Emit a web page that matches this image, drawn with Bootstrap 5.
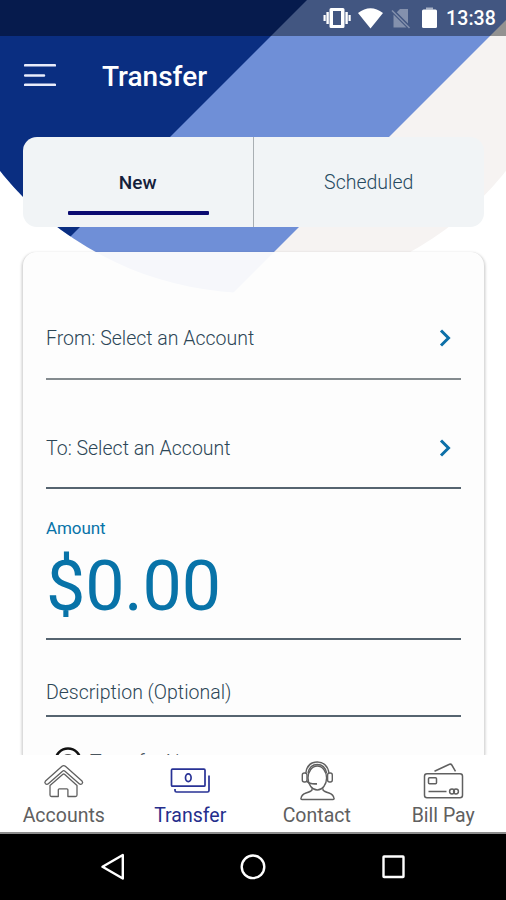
<!DOCTYPE html>
<html lang="en">
<head>
<meta charset="utf-8">
<meta name="viewport" content="width=device-width, initial-scale=1">
<title>Transfer</title>
<link href="https://cdn.jsdelivr.net/npm/bootstrap@5.3.0/dist/css/bootstrap.min.css" rel="stylesheet">
<style>
  body { font-family: Roboto, sans-serif; }
  svg { display: block; flex: none; }
  .screen { width: 506px; height: 900px; }
  .backdrop { z-index: 0; }
  .layer { z-index: 1; }
  .status-bar { height: 36px; padding: 0 10px 0 0; background: rgba(0,0,0,.4); }
  .clock { font-size: 19.5px; font-weight: 500; line-height: 36px; margin: 2px 0 0 9px; letter-spacing: .1px; }
  .app-bar { height: 101px; padding: 22px 24px 0; }
  .page-title { font-size: 28px; font-weight: 500; line-height: 38px; margin: 0 0 0 46px; }
  .tabs { height: 90px; margin: 0 22px 0 23px; border-radius: 14px; background: #f1f4f6; }
  .tab { border: 0; padding: 0; background: none; font-size: 19.5px; font-weight: 300; color: #264960; line-height: 92px; height: 90px; }
  .tab.current { color: #14203a; font-weight: 500; font-size: 19px; border-right: 1px solid #a9afb3; }
  .tab.current::after { content: ""; position: absolute; left: 45px; width: 141px; bottom: 12px; height: 4px; border-radius: 1px; background: #0b0b71; }
  .form-panel { margin: 25px 21px 0 22px; padding: 0 23px; height: 503px; border-radius: 14px 14px 0 0; background: rgba(253,253,253,.95); border: 0 solid #dcdcdc; border-width: 0 1px; box-shadow: 0 1px 3px rgba(0,0,0,.25); }
  .field { border-bottom: 2px solid #566470; font-size: 19.5px; font-weight: 300; color: #2c4656; line-height: 24px; }
  .field-from { height: 128px; padding: 75px 7px 0 0; border-color: #848b8f; }
  .field-to { height: 109px; padding: 57px 7px 0 0; }
  .field svg { margin-top: -1px; }
  .field-amount { height: 151px; padding-top: 27px; color: #0873a8; }
  .amount-label { font-size: 17px; font-weight: 400; line-height: 24px; letter-spacing: -.1px; }
  .amount-value { font-size: 70px; font-weight: 400; line-height: 82px; margin-top: 5px; letter-spacing: -.2px; }
  .field-desc { height: 77px; padding-top: 41px; }
  .option { padding: 29px 0 0 8px; font-size: 19.5px; line-height: 28px; color: #4a555d; font-weight: 300; }
  .option span { padding-top: 3px; }
  .bottom-nav { height: 79px; background: #fff; border-bottom: 2px solid #8c8c8c; padding-top: 5px; }
  .nav-entry { font-size: 19.5px; font-weight: 400; color: #606060; line-height: 24px; padding-left: 1px; }
  .nav-entry.current { color: #252e8c; }
  .nav-entry svg { margin-bottom: 2px; }
  .system-bar { height: 66px; background: #000; }
</style>
<script src="https://cdn.jsdelivr.net/npm/bootstrap@5.3.0/dist/js/bootstrap.bundle.min.js"></script>
</head>
<body class="bg-white">
<div class="screen position-relative overflow-hidden bg-white">
  <svg class="backdrop position-absolute top-0 start-0" width="506" height="300" viewBox="0 0 506 300">
    <defs><clipPath id="dome"><circle cx="253" cy="-30" r="323"/></clipPath></defs>
    <g clip-path="url(#dome)">
      <path fill="#f6f3f2" d="M0 0H506V300H0z"/>
      <path fill="#6f8fd7" d="M0 0H526L226 300H0z"/>
      <path fill="#0a2e81" d="M0 0H307L7 300H0z"/>
    </g>
  </svg>

  <div class="layer position-relative d-flex flex-column h-100">
    <div class="status-bar d-flex align-items-center justify-content-end text-white">
      <svg width="114" height="36" viewBox="323 0 114 36" fill="#fff">
        <path d="M331 8h12a1.5 1.5 0 0 1 1.500 1.500v17a1.500 1.500 0 0 1-1.500 1.500h-12a1.500 1.500 0 0 1-1.500-1.500v-17A1.500 1.500 0 0 1 331 8zm2 3v14h8V11z"/>
        <path d="M326.400 12h2.400v12h-2.400zM323.500 15h2.200v6h-2.200zM345.400 12h2.400v12h-2.400zM348.500 15h2.200v6h-2.200z"/>
        <path d="M358 13q12.500-9.500 25 0l-12.500 15.500z"/>
        <path fill-opacity=".35" d="M400 9h8v14.500L396.800 12.300zM393.500 14.500L406.500 27.500H393.500z"/>
        <path fill="none" stroke="#fff" stroke-opacity=".35" stroke-width="1.500" d="M392 10.500L409.500 28"/>
        <path d="M422 11q0-1.500 1.500-1.500h12q1.500 0 1.500 1.500v15.500q0 1.500-1.500 1.500h-12q-1.500 0-1.500-1.500z"/>
        <path fill-opacity=".55" d="M426 7.500h7v2h-7z"/>
      </svg>
      <span class="clock">13:38</span>
    </div>

    <header class="app-bar d-flex align-items-start text-white">
      <svg width="32" height="38" viewBox="24 58 32 38" fill="none" stroke="#e9ecfb" stroke-width="2.500" stroke-linecap="round"><path d="M25 65.300H55M25 75.500H44M25 84.800H55"/></svg>
      <h1 class="page-title">Transfer</h1>
    </header>

    <div class="tabs row g-0">
      <button class="tab current col-auto position-relative text-center w-50 pe-0">New</button>
      <button class="tab col text-center">Scheduled</button>
    </div>

    <main class="form-panel overflow-hidden">
      <div class="field field-from d-flex justify-content-between align-items-start">
        <span>From: Select an Account</span>
        <svg width="16" height="24" viewBox="0 0 16 24" fill="none" stroke="#0d70a8" stroke-width="3"><path d="M3 4.500L10.500 12 3 19.500"/></svg>
      </div>
      <div class="field field-to d-flex justify-content-between align-items-start">
        <span>To: Select an Account</span>
        <svg width="16" height="24" viewBox="0 0 16 24" fill="none" stroke="#0d70a8" stroke-width="3"><path d="M3 4.500L10.500 12 3 19.500"/></svg>
      </div>
      <div class="field field-amount">
        <div class="amount-label">Amount</div>
        <div class="amount-value">$0.00</div>
      </div>
      <div class="field field-desc">Description (Optional)</div>
      <div class="option d-flex align-items-start">
        <svg width="28" height="28" viewBox="0 0 28 28"><circle cx="14" cy="15" r="12.500" fill="none" stroke="#111" stroke-width="2.500"/><circle cx="14" cy="15" r="7" fill="#555"/></svg>
        <span class="ms-2">Transfer Now</span>
      </div>
    </main>

    <nav class="bottom-nav row g-0 text-center">
      <div class="nav-entry col d-flex flex-column align-items-center">
        <svg width="42" height="42" viewBox="43 760 42 42" fill="none" stroke="#606060" stroke-width="1.300" stroke-linejoin="round">
          <path d="M62 766.300q1.700-1.300 3.400 0L82 781q1.300 1.500 0 2.700-1.400 1.200-2.800 0L65 771.200q-1.200-1-2.500 0L48.300 783.700q-1.400 1.200-2.800 0-1.300-1.200 0-2.700z"/>
          <path d="M50 785.500V795q0 1.500 1.500 1.500h6.800v-6.700q0-1 1-1h7.600q1 0 1 1v6.700h7.600q1.500 0 1.500-1.500v-9.500L64.500 774.300q-.8-.7-1.600 0z"/>
        </svg>
        <span>Accounts</span>
      </div>
      <div class="nav-entry current col d-flex flex-column align-items-center">
        <svg width="42" height="42" viewBox="169 760 42 42" fill="none" stroke="#283295" stroke-width="1.700">
          <rect x="171.500" y="769.200" width="33.500" height="17" rx="1"/>
          <ellipse cx="188.300" cy="777.800" rx="2.800" ry="3.900"/>
          <path d="M209 775.500v15q0 1.500-1.500 1.500H176.500q-1.500 0-1.500-1.500v-1.500"/>
        </svg>
        <span>Transfer</span>
      </div>
      <div class="nav-entry col d-flex flex-column align-items-center">
        <svg width="42" height="42" viewBox="295 760 42 42" fill="none" stroke="#606060" stroke-width="1.400" stroke-linejoin="round">
          <ellipse cx="316.300" cy="778" rx="9.300" ry="12"/>
          <path d="M304.700 773.500C305.500 766 310 762 316.300 762S327.200 766 328 773.500M307 773q1.800-8.500 9.300-8.500t9.300 8.500"/>
          <rect x="301.300" y="773" width="4.700" height="9" rx="2"/><rect x="326.600" y="773" width="4.700" height="9" rx="2"/>
          <path d="M305.500 781q3.500 3.500 10.500 2.800" stroke-width="1.700"/>
          <path d="M311 788.500v1.500q-1 1.500-6 3-4.500 1.500-5 5.500-.2 1 1 1h31q1.200 0 1-1-.5-4-5-5.500-5-1.500-6-3v-1.500"/>
        </svg>
        <span>Contact</span>
      </div>
      <div class="nav-entry col d-flex flex-column align-items-center">
        <svg width="42" height="42" viewBox="422 760 42 42" fill="none" stroke="#606060" stroke-width="1.500" stroke-linejoin="round">
          <rect x="424.500" y="773.700" width="38" height="24" rx="2.500"/>
          <rect x="428.500" y="777.800" width="8" height="6" rx="1"/>
          <path d="M434.500 771.300L449.500 764.300q1.500-.6 2.300.7L455.500 771.300M428.500 791.500H446.500"/>
          <circle cx="452" cy="791.500" r="2.400"/><circle cx="456" cy="791.500" r="2.400"/>
        </svg>
        <span>Bill Pay</span>
      </div>
    </nav>

    <div class="system-bar d-flex align-items-center justify-content-center">
      <svg width="304" height="36" viewBox="102 849 304 36" fill="none" stroke="#fff" stroke-width="2.400" stroke-linejoin="round">
        <path d="M123.800 855v23.500L103.500 866.800z"/>
        <circle cx="254" cy="866.800" r="11.300"/>
        <rect x="384.500" y="856.500" width="20" height="20.500" rx=".5"/>
      </svg>
    </div>
  </div>
</div>
</body>
</html>
